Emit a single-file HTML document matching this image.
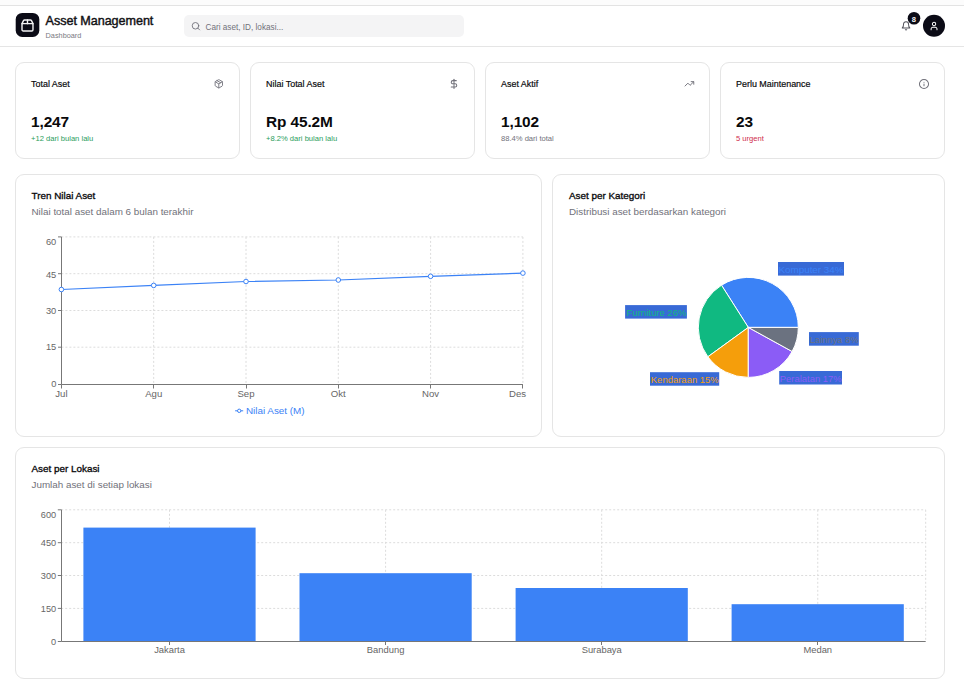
<!DOCTYPE html>
<html><head><meta charset="utf-8">
<style>
html,body{margin:0;padding:0;background:#fff;width:964px;height:684px;overflow:hidden;font-family:"Liberation Sans",sans-serif;}
.card{position:absolute;box-sizing:border-box;border:1px solid #e5e5e5;border-radius:9px;background:#fff;}
svg{position:absolute;left:0;top:0;}
text{font-family:"Liberation Sans",sans-serif;}
</style></head><body>
<!-- header lines -->
<div style="position:absolute;left:0;top:0;width:964px;height:5px;background:#fcfcfc"></div>
<div style="position:absolute;left:0;top:5px;width:964px;height:1px;background:#e3e3e3"></div>
<div style="position:absolute;left:0;top:46px;width:964px;height:1px;background:#e5e5e5"></div>
<!-- search -->
<div style="position:absolute;left:184px;top:15px;width:280px;height:22px;border-radius:5px;background:#f4f4f5"></div>
<!-- cards -->
<div class="card" style="left:15px;top:62px;width:225px;height:97px"></div>
<div class="card" style="left:250px;top:62px;width:225px;height:97px"></div>
<div class="card" style="left:485px;top:62px;width:225px;height:97px"></div>
<div class="card" style="left:720px;top:62px;width:225px;height:97px"></div>
<div class="card" style="left:15px;top:174px;width:527px;height:263px"></div>
<div class="card" style="left:552px;top:174px;width:393px;height:263px"></div>
<div class="card" style="left:15px;top:447px;width:930px;height:232px"></div>

<svg width="964" height="684" viewBox="0 0 964 684">
<!-- logo -->
<rect x="15.7" y="12.9" width="23.6" height="24" rx="6.5" fill="#0b0b16"/>
<g transform="translate(20.17,18.17) scale(0.61)" fill="none" stroke="#f4f4f5" stroke-width="2.3" stroke-linecap="round" stroke-linejoin="round">
<path d="M3 9h18v10a2 2 0 0 1-2 2H5a2 2 0 0 1-2-2V9Z"/><path d="m3 9 2.45-4.9A2 2 0 0 1 7.24 3h9.52a2 2 0 0 1 1.8 1.1L21 9"/><path d="M12 3v6"/>
</g>
<text x="45.6" y="24.7" font-size="12.6" letter-spacing="-0.05" fill="#111114" stroke="#111114" stroke-width="0.42">Asset Management</text>
<text x="45.6" y="37.6" font-size="7.3" fill="#7a7a82">Dashboard</text>
<!-- search icon -->
<g transform="translate(190.98,21.28) scale(0.41)" fill="none" stroke="#71717a" stroke-width="2.2" stroke-linecap="round">
<circle cx="11" cy="11" r="8"/><path d="m21 21-4.3-4.3"/>
</g>
<text x="205.5" y="29.9" font-size="8.2" fill="#71717a">Cari aset, ID, lokasi...</text>
<!-- bell -->
<g transform="translate(901,20.8) scale(0.42)" fill="none" stroke="#52525b" stroke-width="2.4" stroke-linecap="round" stroke-linejoin="round">
<path d="M6 8a6 6 0 0 1 12 0c0 7 3 9 3 9H3s3-2 3-9"/><path d="M10.3 21a1.94 1.94 0 0 0 3.4 0"/>
</g>
<circle cx="914" cy="18.3" r="6.3" fill="#0b0b16"/>
<text x="913.8" y="21.7" font-size="7.6" font-weight="700" fill="#f4f4f5" text-anchor="middle">8</text>
<circle cx="934" cy="25.7" r="11" fill="#0b0b16"/>
<g transform="translate(929.01,21.01) scale(0.42)" fill="none" stroke="#fff" stroke-width="2.4" stroke-linecap="round" stroke-linejoin="round">
<path d="M19 21v-2a4 4 0 0 0-4-4H9a4 4 0 0 0-4 4v2"/><circle cx="12" cy="7" r="4"/>
</g>


<!-- stat icons -->
<g fill="none" stroke="#71717a" stroke-width="2.2" stroke-linecap="round" stroke-linejoin="round">
<g transform="translate(213.88,78.88) scale(0.41)"><path d="M11 21.73a2 2 0 0 0 2 0l7-4A2 2 0 0 0 21 16V8a2 2 0 0 0-1-1.73l-7-4a2 2 0 0 0-2 0l-7 4A2 2 0 0 0 3 8v8a2 2 0 0 0 1 1.73z"/><path d="M12 22V12"/><path d="m3.3 7 7.703 4.734a2 2 0 0 0 1.994 0L20.7 7"/><path d="m7.5 4.27 9 5.15"/></g>
<g transform="translate(448.48,78.33) scale(0.46)"><path d="M12 2v20"/><path d="M17 5H9.5a3.5 3.5 0 0 0 0 7h5a3.5 3.5 0 0 1 0 7H6"/></g>
<g transform="translate(684.2,78.6) scale(0.435)"><polyline points="22 7 13.5 15.5 8.5 10.5 2 17"/><polyline points="16 7 22 7 22 13"/></g>
<g transform="translate(918.54,78.54) scale(0.455)"><circle cx="12" cy="12" r="10"/><path d="M12 16v-4"/><path d="M12 8h.01"/></g>
</g>
<!-- stat cards -->
<g font-size="8.95" fill="#09090b" stroke="#09090b" stroke-width="0.18">
<text x="31" y="87.2">Total Aset</text>
<text x="266" y="87.2">Nilai Total Aset</text>
<text x="501" y="87.2">Aset Aktif</text>
<text x="736" y="87.2">Perlu Maintenance</text>
</g>
<g font-size="15.4" font-weight="700" fill="#09090b" letter-spacing="-0.1">
<text x="31" y="126.6">1,247</text>
<text x="266" y="126.6">Rp 45.2M</text>
<text x="501" y="126.6">1,102</text>
<text x="736" y="126.6">23</text>
</g>
<g font-size="7.6">
<text x="31" y="141.1" fill="#2a9d5c">+12 dari bulan lalu</text>
<text x="266" y="141.1" fill="#2a9d5c">+8.2% dari bulan lalu</text>
<text x="501" y="141.1" fill="#71717a">88.4% dari total</text>
<text x="736" y="141.1" fill="#cf2d4b">5 urgent</text>
</g>

<!-- chart titles -->
<g font-size="9.9" fill="#09090b" stroke="#09090b" stroke-width="0.32">
<text x="31.5" y="199">Tren Nilai Aset</text>
<text x="569" y="199">Aset per Kategori</text>
<text x="31.5" y="471.8">Aset per Lokasi</text>
</g>
<g font-size="9.85" fill="#71717a">
<text x="31.5" y="214.9">Nilai total aset dalam 6 bulan terakhir</text>
<text x="569" y="214.9">Distribusi aset berdasarkan kategori</text>
<text x="31.5" y="487.7">Jumlah aset di setiap lokasi</text>
</g>

<!-- line chart -->
<g stroke="#dcdcdc" stroke-width="1" stroke-dasharray="2 2" fill="none">
<path d="M61.4 236.9H522.9M61.4 273.7H522.9M61.4 310.5H522.9M61.4 347.2H522.9"/>
<path d="M153.7 236.9V384M246 236.9V384M338.3 236.9V384M430.6 236.9V384M522.9 236.9V384"/>
</g>
<g stroke="#777" stroke-width="1" fill="none">
<path d="M61.5 236.9V384.5H522.9"/>
<path d="M58 236.9H61.5M58 273.7H61.5M58 310.5H61.5M58 347.2H61.5M58 384.5H61.5"/>
<path d="M61.5 384.5V388.5M153.5 384.5V388.5M246.5 384.5V388.5M338.5 384.5V388.5M430.5 384.5V388.5M522.5 384.5V388.5"/>
</g>
<g font-size="9.3" fill="#666" text-anchor="end">
<text x="56.3" y="244.8">60</text>
<text x="56.3" y="277.8">45</text>
<text x="56.3" y="313.6">30</text>
<text x="56.3" y="350.4">15</text>
<text x="56.3" y="387.2">0</text>
</g>
<g font-size="9.6" fill="#666" text-anchor="middle">
<text x="61.4" y="396.8">Jul</text>
<text x="153.7" y="396.8">Agu</text>
<text x="246" y="396.8">Sep</text>
<text x="338.3" y="396.8">Okt</text>
<text x="430.6" y="396.8">Nov</text>
<text x="517.6" y="396.8">Des</text>
</g>
<polyline points="61.4,289.5 153.7,285.4 246,281.5 338.3,280 430.6,276.3 522.9,273.1" fill="none" stroke="#3b82f6" stroke-width="1.25"/>
<g fill="#fff" stroke="#3b82f6" stroke-width="1">
<circle cx="61.4" cy="289.5" r="2.3"/><circle cx="153.7" cy="285.4" r="2.3"/><circle cx="246" cy="281.5" r="2.3"/><circle cx="338.3" cy="280" r="2.3"/><circle cx="430.6" cy="276.3" r="2.3"/><circle cx="522.9" cy="273.1" r="2.3"/>
</g>
<path d="M235.1 410.8H243.2" stroke="#3b82f6" stroke-width="1"/>
<circle cx="239.2" cy="410.8" r="1.7" fill="#fff" stroke="#3b82f6" stroke-width="1"/>
<text x="245.9" y="413.8" font-size="9.9" fill="#3b82f6">Nilai Aset (M)</text>

<!-- pie -->
<path d="M748.3 327.4L798.30 327.40A50 50 0 0 0 721.51 285.18Z" fill="#3b82f6" stroke="#fff" stroke-width="1"/>
<path d="M748.3 327.4L721.51 285.18A50 50 0 0 0 707.85 356.79Z" fill="#10b981" stroke="#fff" stroke-width="1"/>
<path d="M748.3 327.4L707.85 356.79A50 50 0 0 0 748.30 377.40Z" fill="#f59e0b" stroke="#fff" stroke-width="1"/>
<path d="M748.3 327.4L748.30 377.40A50 50 0 0 0 792.12 351.49Z" fill="#8b5cf6" stroke="#fff" stroke-width="1"/>
<path d="M748.3 327.4L792.12 351.49A50 50 0 0 0 798.30 327.40Z" fill="#6b7280" stroke="#fff" stroke-width="1"/>
<g fill="#386ad6">
<rect x="778" y="262" width="66" height="13.6"/>
<rect x="625.1" y="305.1" width="61.8" height="13.5"/>
<rect x="809" y="332.1" width="49.8" height="13.6"/>
<rect x="650" y="372.2" width="69.2" height="13.5"/>
<rect x="779.2" y="371" width="62.8" height="13.5"/>
</g>
<g font-size="9.7">
<text x="778.5" y="272.9" fill="#3b82f6" textLength="65" lengthAdjust="spacingAndGlyphs">Komputer 34%</text>
<text x="686.5" y="316" fill="#10b981" text-anchor="end" textLength="60" lengthAdjust="spacingAndGlyphs">Furniture 26%</text>
<text x="809.5" y="343" fill="#6b7280" textLength="49" lengthAdjust="spacingAndGlyphs">Lainnya 8%</text>
<text x="718.8" y="383.1" fill="#f59e0b" text-anchor="end" textLength="68" lengthAdjust="spacingAndGlyphs">Kendaraan 15%</text>
<text x="779.7" y="381.9" fill="#8b5cf6" textLength="62" lengthAdjust="spacingAndGlyphs">Peralatan 17%</text>
</g>

<!-- bar chart -->
<g stroke="#dcdcdc" stroke-width="1" stroke-dasharray="2 2" fill="none">
<path d="M61.2 509.8H925.7M61.2 542.7H925.7M61.2 575.5H925.7M61.2 608.4H925.7"/>
<path d="M169.5 509.8V641.2M385.6 509.8V641.2M601.7 509.8V641.2M817.75 509.8V641.2M925.7 509.8V641.2"/>
</g>
<g fill="#3b82f6">
<rect x="83.4" y="527.6" width="172.2" height="113.6"/>
<rect x="299.5" y="573.2" width="172.2" height="68"/>
<rect x="515.6" y="588" width="172.2" height="53.2"/>
<rect x="731.6" y="604.2" width="172.2" height="37"/>
</g>
<g stroke="#777" stroke-width="1" fill="none">
<path d="M61.5 509.8V641.5H925.7"/>
<path d="M57.8 509.8H61.5M57.8 542.7H61.5M57.8 575.5H61.5M57.8 608.4H61.5M57.8 641.5H61.5"/>
<path d="M169.5 641.5V645M385.5 641.5V645M601.5 641.5V645M817.5 641.5V645"/>
</g>
<g font-size="9.2" fill="#666" text-anchor="end">
<text x="56.2" y="518.3">600</text>
<text x="56.2" y="546.1">450</text>
<text x="56.2" y="579.1">300</text>
<text x="56.2" y="611.9">150</text>
<text x="56.2" y="644.7">0</text>
</g>
<g font-size="9.4" fill="#666" text-anchor="middle">
<text x="169.5" y="653">Jakarta</text>
<text x="385.6" y="653">Bandung</text>
<text x="601.7" y="653">Surabaya</text>
<text x="817.75" y="653">Medan</text>
</g>
</svg>
</body></html>
